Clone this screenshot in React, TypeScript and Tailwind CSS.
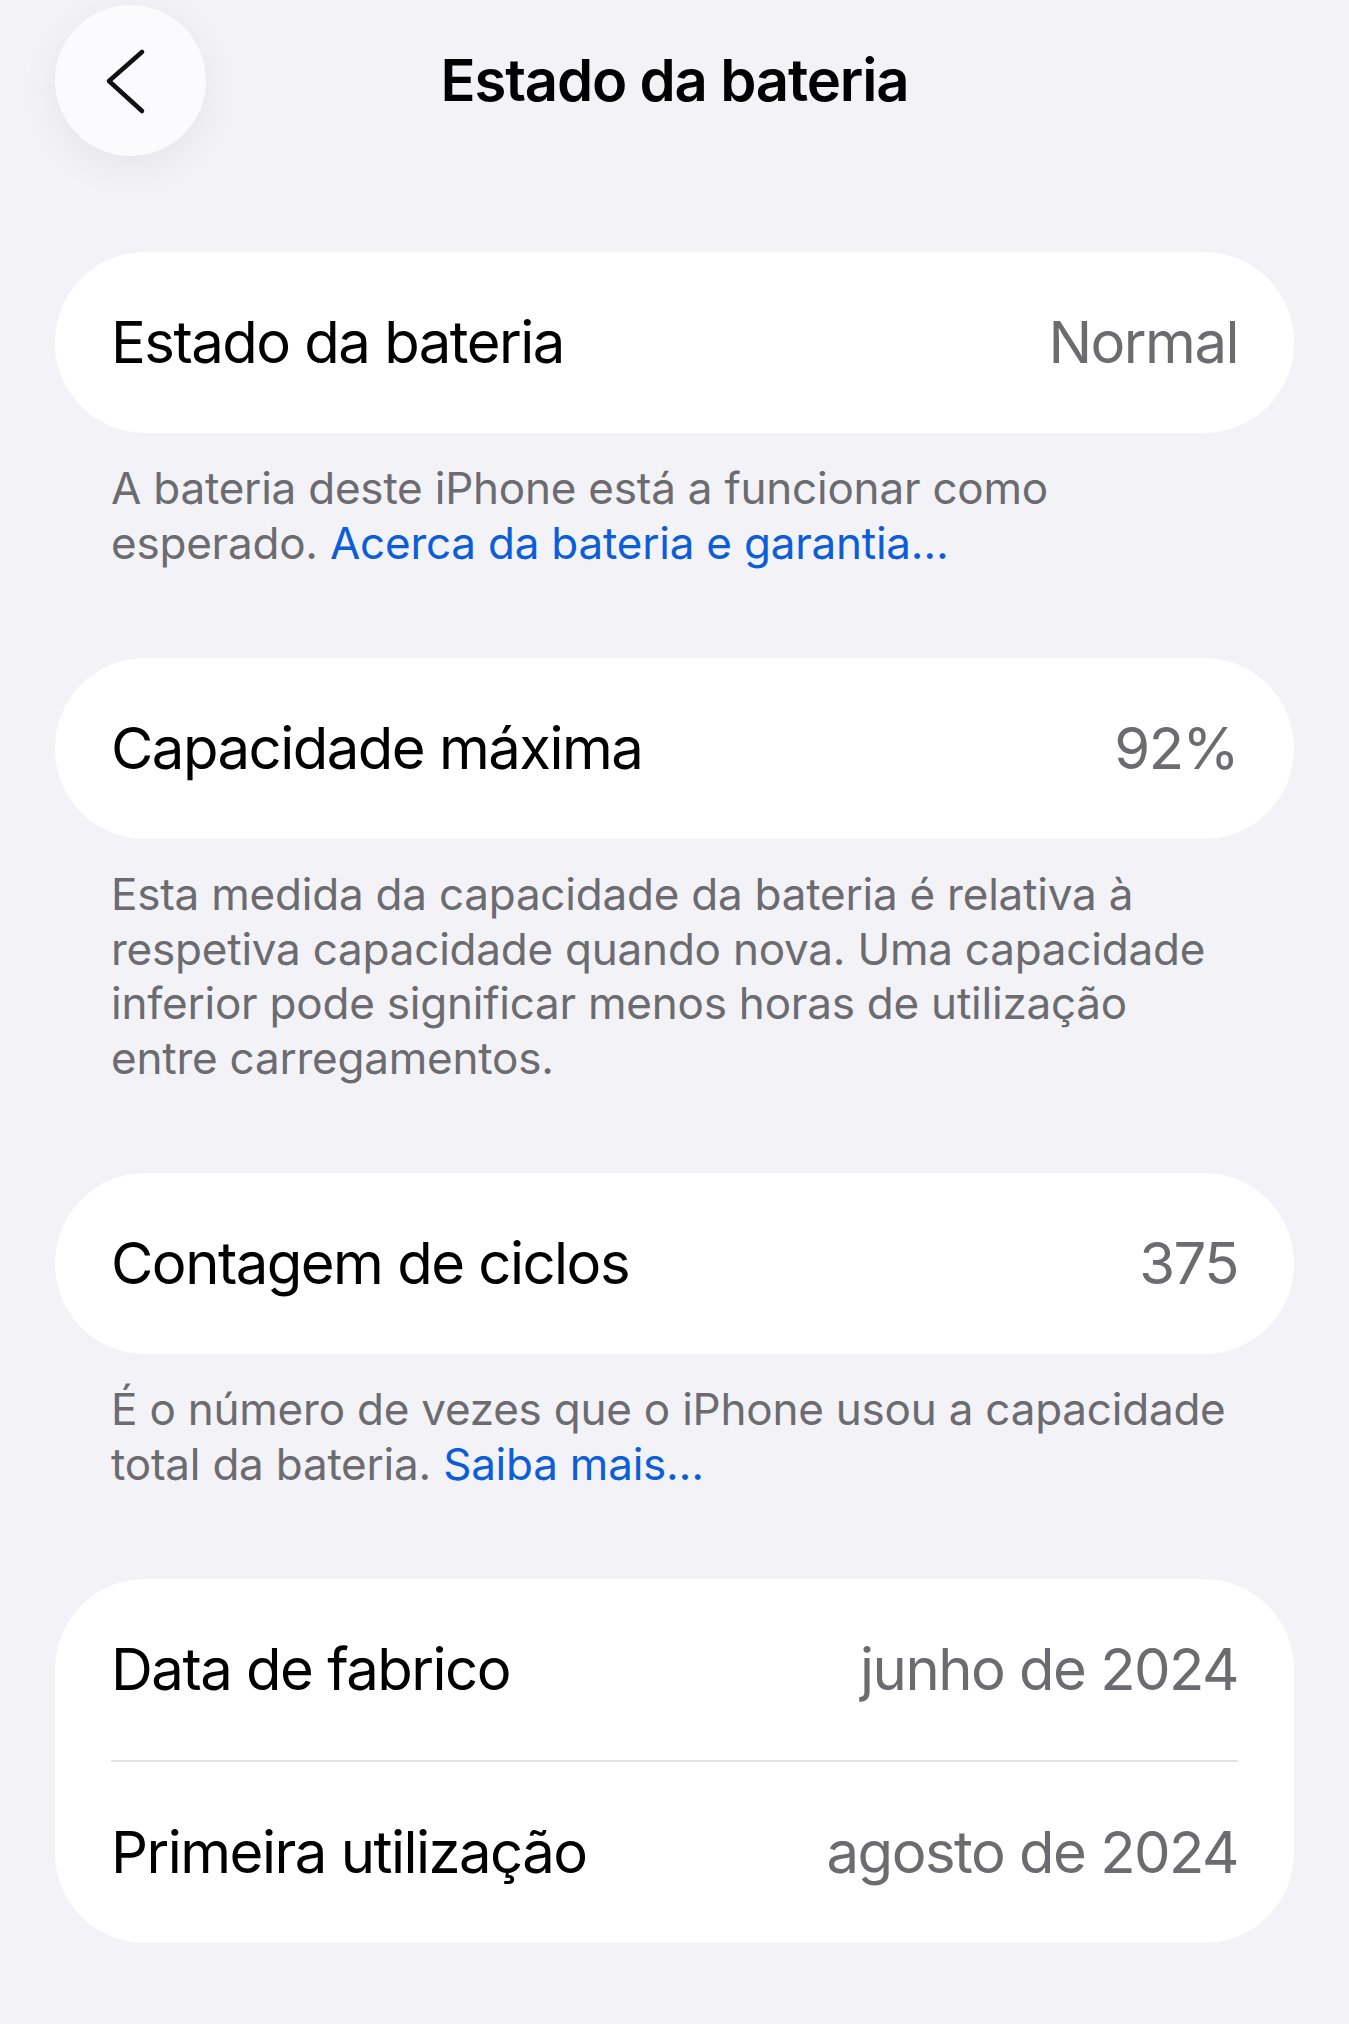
import { Fragment } from "react";

type Row = { label: string; value: string };

type Section = {
  rows: Row[];
  note?: { text: string; link?: string };
};

const sections: Section[] = [
  {
    rows: [{ label: "Estado da bateria", value: "Normal" }],
    note: {
      text: "A bateria deste iPhone está a funcionar como esperado.",
      link: "Acerca da bateria e garantia…",
    },
  },
  {
    rows: [{ label: "Capacidade máxima", value: "92%" }],
    note: {
      text: "Esta medida da capacidade da bateria é relativa à respetiva capacidade quando nova. Uma capacidade inferior pode significar menos horas de utilização entre carregamentos.",
    },
  },
  {
    rows: [{ label: "Contagem de ciclos", value: "375" }],
    note: {
      text: "É o número de vezes que o iPhone usou a capacidade total da bateria.",
      link: "Saiba mais…",
    },
  },
  {
    rows: [
      { label: "Data de fabrico", value: "junho de 2024" },
      { label: "Primeira utilização", value: "agosto de 2024" },
    ],
  },
];

function BackButton() {
  return (
    <button className="w-[151px] h-[151px] rounded-full bg-[#fbfbfd] flex items-center justify-center shadow-[0_10px_40px_rgba(0,0,0,0.06)]">
      <svg width="151" height="151" viewBox="0 0 151 151" fill="none">
        <path
          d="M87 47 L54 76 L87 106"
          stroke="#111"
          strokeWidth="4.5"
          strokeLinecap="round"
          strokeLinejoin="round"
        />
      </svg>
    </button>
  );
}

function Card({ rows }: { rows: Row[] }) {
  return (
    <div className="bg-white rounded-[90px] px-[56px]">
      {rows.map((r, i) => (
        <Fragment key={r.label}>
          {i > 0 && <div className="h-[2px] bg-[#e2e2e5]" />}
          <div className="h-[181px] flex items-center justify-between text-[58px] tracking-[-0.026em]">
            <span className="text-black">{r.label}</span>
            <span className="text-[#6c6c70]">{r.value}</span>
          </div>
        </Fragment>
      ))}
    </div>
  );
}

export default function App() {
  return (
    <div
      className="min-h-[2024px] bg-[#f2f2f7] px-[55px] pb-24"
      style={{ fontFamily: "Inter, 'Noto Sans', sans-serif" }}
    >
      {/* nav bar */}
      <div className="relative h-[160px] pt-[5px]">
        <BackButton />
        <h1 className="absolute left-0 right-0 top-[42px] text-center text-[58px] leading-[76px] font-semibold tracking-[-0.02em] text-black -mx-[55px]">
          Estado da bateria
        </h1>
      </div>

      <div className="pt-[92px] flex flex-col">
        {sections.map((s, i) => (
          <div key={i} className={i > 0 ? "mt-[88px]" : ""}>
            <Card rows={s.rows} />
            {s.note && (
              <p className="mt-[28px] px-[56px] text-[44px] leading-[54.5px] tracking-[-0.005em] text-[#6b6b70]">
                {s.note.text}
                {s.note.link && (
                  <>
                    {" "}
                    <a className="text-[#0b5ed7]">{s.note.link}</a>
                  </>
                )}
              </p>
            )}
          </div>
        ))}
      </div>
    </div>
  );
}
